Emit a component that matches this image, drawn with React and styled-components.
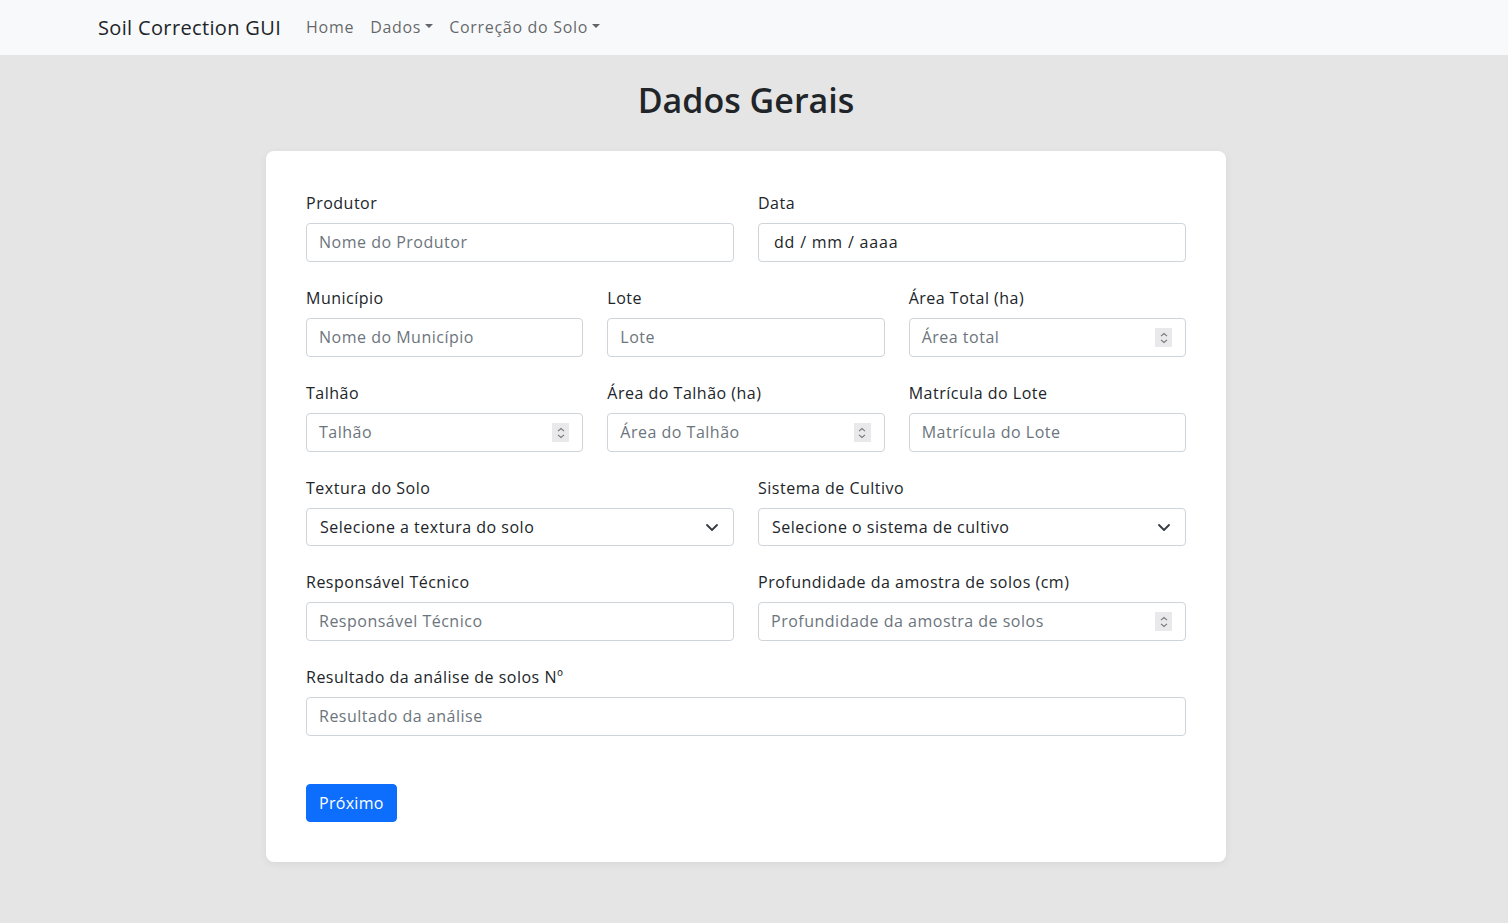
import React from "react";
import styled, { createGlobalStyle } from "styled-components";

const FONT = `"Open Sans", "Noto Sans", "Liberation Sans", sans-serif`;

const Global = createGlobalStyle`
  * { box-sizing: border-box; }
  html, body { margin: 0; padding: 0; }
  body {
    background: #e5e5e5;
    font-family: ${FONT};
    color: #212529;
    font-size: 16px;
  }
`;

const Page = styled.div`
  min-height: 923px;
  background: #e5e5e5;
`;

const Navbar = styled.nav`
  height: 55px;
  background: #f8f9fa;
  display: flex;
  align-items: center;
  padding: 0 98px 1px;
`;

const Brand = styled.a`
  font-size: 20px;
  color: #212529;
  letter-spacing: 0.35px;
  margin-right: 25px;
  text-decoration: none;
`;

const NavLinks = styled.div`
  display: flex;
  align-items: center;
  gap: 16px;
`;

const NavLink = styled.a`
  font-size: 16px;
  color: rgba(33, 37, 41, 0.7);
  letter-spacing: 0.7px;
  text-decoration: none;
  display: flex;
  align-items: center;
  &::after {
    content: ${(p) => (p.$dropdown ? '""' : "none")};
    display: inline-block;
    margin-left: 4px;
    border-top: 4px solid currentColor;
    border-left: 4px solid transparent;
    border-right: 4px solid transparent;
    margin-top: -2px;
  }
`;

const Main = styled.main`
  padding-right: 16px;
`;

const Title = styled.h1`
  margin: 0;
  padding-top: 21px;
  height: 96px;
  text-align: center;
  font-size: 34px;
  font-weight: 600;
  line-height: 48px;
  color: #212529;
`;

const Card = styled.form`
  width: 960px;
  margin: 0 auto;
  background: #fff;
  border-radius: 8px;
  box-shadow: 0 2px 8px rgba(0, 0, 0, 0.06);
  padding: 40px;
`;

const Row = styled.div`
  display: grid;
  grid-template-columns: repeat(${(p) => p.$cols}, 1fr);
  column-gap: 24px;
  margin-bottom: 24px;
`;

const Field = styled.div`
  display: flex;
  flex-direction: column;
`;

const Label = styled.label`
  font-size: 16px;
  line-height: 24px;
  margin-bottom: 8px;
  color: #212529;
  letter-spacing: 0.5px;
  white-space: nowrap;
`;

const InputBox = styled.div`
  height: ${(p) => (p.$select ? "38px" : "39px")};
  border: 1px solid #ced4da;
  border-radius: 4px;
  background: #fff;
  display: flex;
  align-items: center;
  padding: 0 ${(p) => (p.$select ? "14px" : "12px")} 1px
    ${(p) => (p.$date ? "15px" : p.$select ? "13px" : "12px")};
  font-size: 16px;
  color: ${(p) => (p.$filled ? "#212529" : "#6c757d")};
  letter-spacing: ${(p) => (p.$date ? "0.8px" : "0.5px")};
  justify-content: space-between;
  white-space: nowrap;
`;

const Spinner = styled.span`
  width: 17px;
  height: 19px;
  background: #e9e9ec;
  display: flex;
  align-items: center;
  justify-content: center;
  margin-right: 1px;
  margin-top: 1px;
`;

const Button = styled.button`
  margin-top: 24px;
  height: 38px;
  padding: 0 12px 1px;
  background: #0d6efd;
  color: #fff;
  border: 1px solid #0d6efd;
  border-radius: 4px;
  font-family: ${FONT};
  font-size: 16px;
  letter-spacing: 0.3px;
`;

const SpinIcon = () => (
  <svg width="8" height="12" viewBox="0 0 8 12" fill="none" stroke="#777" strokeWidth="1.1">
    <path d="M1 4.2 L4 1.6 L7 4.2" />
    <path d="M1 7.8 L4 10.4 L7 7.8" />
  </svg>
);

const Chevron = () => (
  <svg width="14" height="10" viewBox="0 0 14 10" fill="none" stroke="#343a40" strokeWidth="1.8" strokeLinecap="round" strokeLinejoin="round">
    <path d="M2 3 L7 8 L12 3" />
  </svg>
);

const Input = ({ label, placeholder, spin, select, date }) => (
  <Field>
    <Label>{label}</Label>
    <InputBox $filled={select || date} $select={select} $date={date}>
      <span>{placeholder}</span>
      {spin && (
        <Spinner>
          <SpinIcon />
        </Spinner>
      )}
      {select && <Chevron />}
    </InputBox>
  </Field>
);

export default function App() {
  return (
    <Page>
      <Global />
      <Navbar>
        <Brand>Soil Correction GUI</Brand>
        <NavLinks>
          <NavLink>Home</NavLink>
          <NavLink $dropdown>Dados</NavLink>
          <NavLink $dropdown>Correção do Solo</NavLink>
        </NavLinks>
      </Navbar>
      <Main>
        <Title>Dados Gerais</Title>
        <Card>
          <Row $cols={2}>
            <Input label="Produtor" placeholder="Nome do Produtor" />
            <Input label="Data" placeholder="dd / mm / aaaa" date />
          </Row>
          <Row $cols={3}>
            <Input label="Município" placeholder="Nome do Município" />
            <Input label="Lote" placeholder="Lote" />
            <Input label="Área Total (ha)" placeholder="Área total" spin />
          </Row>
          <Row $cols={3}>
            <Input label="Talhão" placeholder="Talhão" spin />
            <Input label="Área do Talhão (ha)" placeholder="Área do Talhão" spin />
            <Input label="Matrícula do Lote" placeholder="Matrícula do Lote" />
          </Row>
          <Row $cols={2}>
            <Input label="Textura do Solo" placeholder="Selecione a textura do solo" select />
            <Input label="Sistema de Cultivo" placeholder="Selecione o sistema de cultivo" select />
          </Row>
          <Row $cols={2}>
            <Input label="Responsável Técnico" placeholder="Responsável Técnico" />
            <Input label="Profundidade da amostra de solos (cm)" placeholder="Profundidade da amostra de solos" spin />
          </Row>
          <Row $cols={1}>
            <Input label="Resultado da análise de solos Nº" placeholder="Resultado da análise" />
          </Row>
          <Button type="button">Próximo</Button>
        </Card>
      </Main>
    </Page>
  );
}
